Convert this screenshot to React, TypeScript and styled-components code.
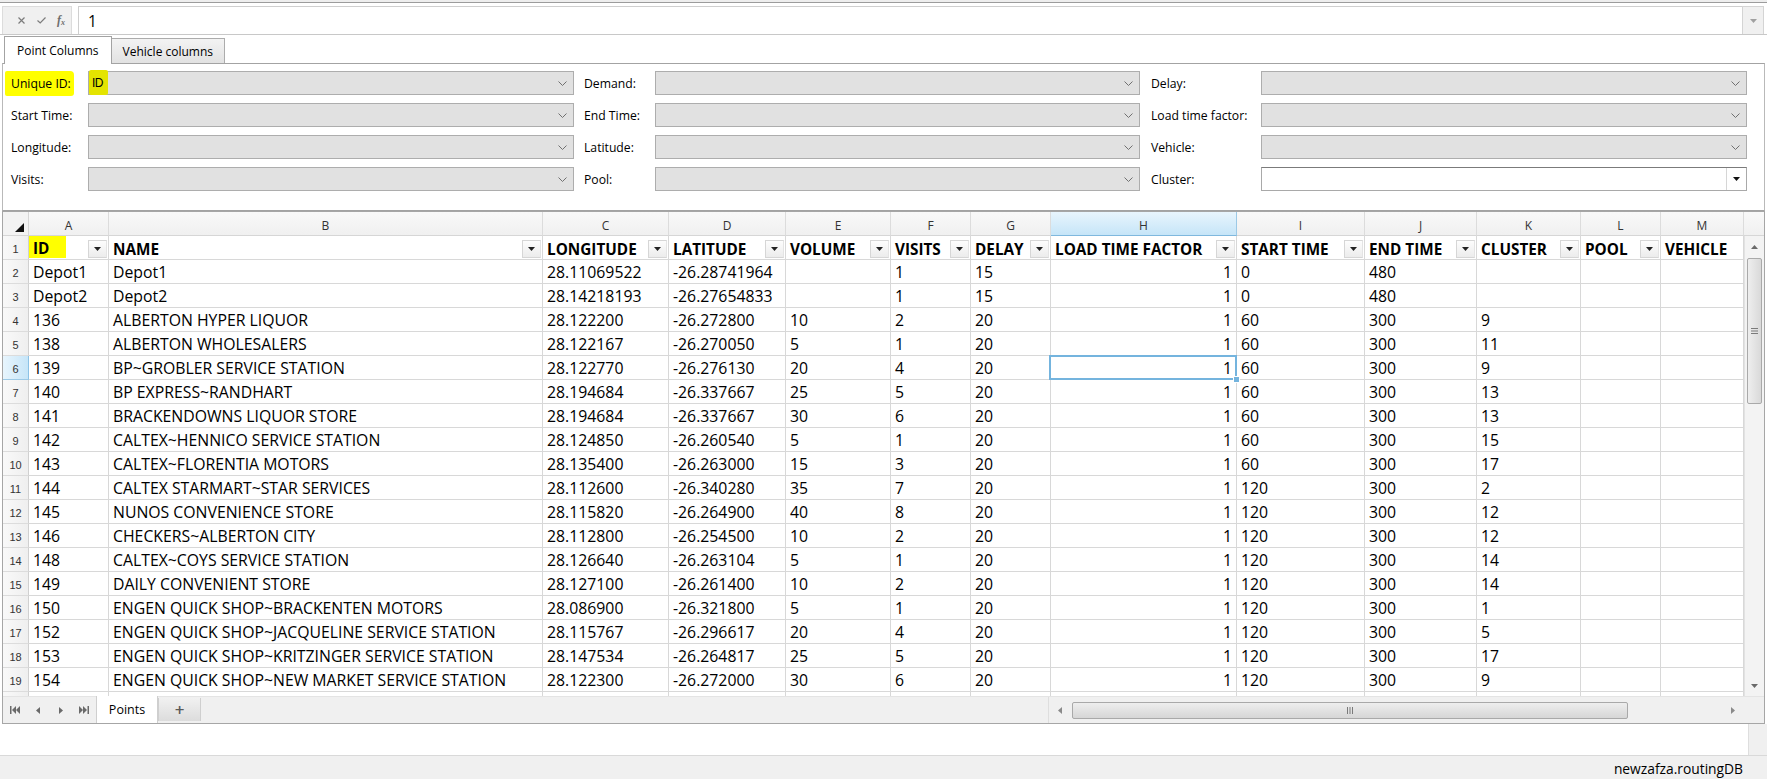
import React from "react";
import styled, { createGlobalStyle } from "styled-components";

const GlobalStyle = createGlobalStyle`
  html, body { margin: 0; padding: 0; background: #ffffff; }
  body { font-family: "Open Sans", "Noto Sans", sans-serif; color: #000; }
  *, *::before, *::after { box-sizing: border-box; }
`;

const Window = styled.div`
  width: 1767px;
  height: 779px;
  display: flex;
  flex-direction: column;
  background: #ffffff;
  overflow: hidden;
`;

const TopEdge = styled.div`
  flex: 0 0 3px;
  background: #eeeeee;
  border-bottom: 1px solid #9c9c9c;
`;

/* ---------- Formula bar ---------- */
const FormulaBar = styled.div`
  flex: 0 0 29px;
  margin-top: 3px;
  display: flex;
  padding: 0 3px 0 2px;
  border-bottom: 1px solid #c8c8c8;
`;

const FxButtons = styled.div`
  width: 70px;
  background: #f0f0f0;
  border: 1px solid #dcdcdc;
  border-bottom: none;
  display: flex;
  align-items: center;
  padding-left: 8px;
`;

const FxBtn = styled.span`
  width: 23px;
  display: flex;
  align-items: center;
  justify-content: center;
  color: #7c7c7c;
`;

const FxText = styled.span`
  font-family: "Liberation Serif", serif;
  font-style: italic;
  font-weight: 700;
  font-size: 12px;
  color: #6e6e6e;
  & sub { font-size: 8px; vertical-align: -1px; }
`;

const FormulaInput = styled.div`
  flex: 1;
  margin-left: 6px;
  border: 1px solid #cfcfcf;
  border-bottom: none;
  border-right: none;
  background: #fff;
  display: flex;
  align-items: center;
  padding: 1px 0 0 9px;
  font-size: 15.5px;
`;

const FormulaDrop = styled.div`
  width: 22px;
  background: #f0f0f0;
  border: 1px solid #d4d4d4;
  border-bottom: none;
  display: flex;
  align-items: center;
  justify-content: center;
`;

/* ---------- Tabs ---------- */
const TabStrip = styled.div`
  flex: 0 0 28px;
  display: flex;
  align-items: flex-end;
  padding-left: 4px;
`;

const Tab = styled.div<{ $active?: boolean }>`
  position: relative;
  z-index: ${(p) => (p.$active ? 2 : 1)};
  height: ${(p) => (p.$active ? 28 : 25)}px;
  margin-bottom: ${(p) => (p.$active ? -1 : 0)}px;
  margin-left: ${(p) => (p.$active ? 0 : -1)}px;
  padding: 0 ${(p) => (p.$active ? 12 : 11)}px;
  display: flex;
  align-items: center;
  font-size: 12px;
  border: 1px solid ${(p) => (p.$active ? "#a3a3a3" : "#acacac")};
  border-bottom: none;
  background: ${(p) =>
    p.$active ? "#ffffff" : "linear-gradient(#f3f3f3, #e2e2e2)"};
`;

/* ---------- Mapping panel ---------- */
const Panel = styled.div`
  flex: 0 0 148px;
  margin: 0 2px;
  border: 1px solid #a3a3a3;
  border-left-color: #b9b9b9;
  border-right-color: #b9b9b9;
  padding: 7px 0 0 8px;
`;

const FieldGrid = styled.div`
  display: grid;
  grid-template-columns: 77px 486px 81px 485px 121px 486px;
  grid-auto-rows: 24px;
  row-gap: 8px;
  align-items: center;
`;

const FieldLabel = styled.div<{ $indent: number }>`
  padding-left: ${(p) => p.$indent}px;
  font-size: 12.2px;
  white-space: nowrap;
  display: flex;
  align-items: center;
  height: 24px;
`;

const Marker = styled.span`
  display: inline-flex;
  align-items: center;
  height: 25px;
  margin-left: -6px;
  padding: 0 3px 0 6px;
  background: #ffff00;
  border-radius: 2px 4px 3px 2px;
`;

const Combo = styled.div<{ $edit?: boolean }>`
  height: 24px;
  display: flex;
  align-items: stretch;
  justify-content: space-between;
  border: 1px solid ${(p) => (p.$edit ? "#a9a9a9" : "#adadad")};
  border-top-color: ${(p) => (p.$edit ? "#7b7b7b" : "#adadad")};
  background: ${(p) => (p.$edit ? "#ffffff" : "#e1e1e1")};
  font-size: 12px;
`;

const ComboValue = styled.span<{ $marked?: boolean }>`
  display: flex;
  align-items: center;
  padding: 0 5px 0 3px;
  margin-top: -2px;
  margin-bottom: -1px;
  background: ${(p) => (p.$marked ? "#e4e400" : "transparent")};
  font-family: "Liberation Sans Narrow", "Liberation Sans", sans-serif;
  font-size: 12px;
  letter-spacing: -0.5px;
  border-radius: 2px;
`;

const ComboArrow = styled.span<{ $edit?: boolean }>`
  width: ${(p) => (p.$edit ? 20 : 22)}px;
  display: flex;
  align-items: center;
  justify-content: center;
  border-left: ${(p) => (p.$edit ? "1px solid #d6d6d6" : "none")};
`;

/* ---------- Spreadsheet ---------- */
const GridFrame = styled.div`
  flex: 0 0 508px;
  margin: 0 2px;
  border: 1px solid #a6a6a6;
  display: flex;
  flex-direction: column;
  background: #fff;
`;

const ColHeaderRow = styled.div`
  flex: 0 0 24px;
  display: flex;
  background: #f3f3f3;
`;

const Corner = styled.div`
  flex: 0 0 26px;
  border-right: 1px solid #d6d6d6;
  border-bottom: 1px solid #d6d6d6;
  display: flex;
  align-items: flex-end;
  justify-content: flex-end;
  padding: 0 4px 3px 0;
`;

const ColHead = styled.div<{ $w: number; $selected?: boolean }>`
  flex: 0 0 ${(p) => p.$w}px;
  border-right: 1px solid ${(p) => (p.$selected ? "#9cc9e6" : "#dcdcdc")};
  border-bottom: 1px solid ${(p) => (p.$selected ? "#7fb8de" : "#d6d6d6")};
  background: ${(p) =>
    p.$selected ? "linear-gradient(#e8f5fd, #c6e5f8)" : "linear-gradient(#f9f9f9, #f0f0f0)"};
  display: flex;
  align-items: center;
  justify-content: center;
  padding-top: 3px;
  font-size: 12px;
  color: #333;
`;

const ScrollHeadGap = styled.div`
  flex: 1;
  border-bottom: 1px solid #d6d6d6;
  background: linear-gradient(#f9f9f9, #f0f0f0);
`;

const Body = styled.div`
  flex: 0 0 460px;
  display: flex;
  min-height: 0;
`;

const RowsArea = styled.div`
  flex: 0 0 1741px;
  overflow: hidden;
`;

const Row = styled.div`
  display: flex;
  height: 24px;
`;

const RowHead = styled.div<{ $selected?: boolean }>`
  flex: 0 0 26px;
  height: 24px;
  border-right: 1px solid ${(p) => (p.$selected ? "#8cc2e6" : "#d0d0d0")};
  border-bottom: 1px solid ${(p) => (p.$selected ? "#9cc9e6" : "#dcdcdc")};
  background: ${(p) =>
    p.$selected ? "linear-gradient(90deg, #e8f5fd, #c6e5f8)" : "linear-gradient(90deg, #f9f9f9, #efefef)"};
  display: flex;
  align-items: center;
  justify-content: center;
  padding-top: 2px;
  font-family: "Liberation Sans", sans-serif;
  font-size: 11px;
  color: #333;
`;

const Cell = styled.div<{ $w: number; $right?: boolean; $selected?: boolean }>`
  flex: 0 0 ${(p) => p.$w}px;
  height: 24px;
  border-right: 1px solid #d8d8d8;
  border-bottom: 1px solid #d8d8d8;
  padding: 2px 4px 0 4px;
  font-size: 15.8px;
  line-height: 21px;
  text-align: ${(p) => (p.$right ? "right" : "left")};
  white-space: nowrap;
  overflow: ${(p) => (p.$selected ? "visible" : "hidden")};
  position: ${(p) => (p.$selected ? "relative" : "static")};
`;

const SelectionBox = styled.div`
  position: absolute;
  left: -2px;
  top: -1px;
  right: -1px;
  bottom: -1px;
  border: 2px solid #74b4de;
  z-index: 3;
  pointer-events: none;
`;

const FillHandle = styled.div`
  position: absolute;
  right: -5px;
  bottom: -5px;
  width: 7px;
  height: 7px;
  background: #74b4de;
  border: 1px solid #ffffff;
`;

const HeaderCell = styled.div<{ $w: number }>`
  flex: 0 0 ${(p) => p.$w}px;
  height: 24px;
  border-right: 1px solid #d8d8d8;
  border-bottom: 1px solid #d8d8d8;
  padding: 0 1px 0 4px;
  display: flex;
  align-items: center;
  justify-content: space-between;
  font-size: 15.3px;
  font-weight: 700;
  white-space: nowrap;
  overflow: hidden;
`;

const HeaderText = styled.span`
  padding-top: 2px;
`;

const HeaderMark = styled.span`
  display: flex;
  align-items: center;
  align-self: stretch;
  margin: 0 0 1px -4px;
  padding: 2px 17px 0 4px;
  background: #ffff00;
`;

const FilterBtn = styled.span`
  flex: 0 0 19px;
  height: 18px;
  align-self: flex-end;
  margin-bottom: 1px;
  border: 1px solid #d6d6d6;
  border-right-color: #e4e4e4;
  background: linear-gradient(#fdfdfd, #ececec);
  display: flex;
  align-items: center;
  justify-content: center;
`;

/* scrollbars */
const VScroll = styled.div`
  flex: 1;
  display: flex;
  flex-direction: column;
  background: #f3f3f3;
  border-left: 1px solid #e2e2e2;
`;

const ScrollArrow = styled.div<{ $size: number }>`
  flex: 0 0 ${(p) => p.$size}px;
  display: flex;
  align-items: center;
  justify-content: center;
`;

const VTrack = styled.div`
  flex: 1;
  padding: 1px 2px 0 2px;
`;

const VThumb = styled.div`
  height: 146px;
  border: 1px solid #a9a9a9;
  border-radius: 2px;
  background: linear-gradient(90deg, #eeeeee, #d9d9d9);
  display: flex;
  align-items: center;
  justify-content: center;
`;

const BottomBar = styled.div`
  flex: 0 0 22px;
  display: flex;
  background: #f0f0f0;
  border-top: 1px solid #e4e4e4;
`;

const SheetNav = styled.div`
  flex: 0 0 93px;
  display: flex;
  align-items: center;
`;

const NavBtn = styled.span`
  flex: 0 0 23px;
  display: flex;
  align-items: center;
  justify-content: center;
`;

const SheetTab = styled.div<{ $active?: boolean }>`
  flex: 0 0 ${(p) => (p.$active ? 62 : 43)}px;
  margin: ${(p) => (p.$active ? "-1px 0 0 0" : "1px 0 2px 0")};
  display: flex;
  align-items: center;
  justify-content: center;
  font-size: ${(p) => (p.$active ? 12.5 : 17)}px;
  font-weight: ${(p) => (p.$active ? 400 : 600)};
  color: ${(p) => (p.$active ? "#000" : "#5a5a5a")};
  background: ${(p) => (p.$active ? "#ffffff" : "linear-gradient(#f1f1f1, #dcdcdc)")};
  border-left: 1px solid #cfcfcf;
  border-right: 1px solid #cfcfcf;
`;

const TabSpace = styled.div`
  flex: 0 0 848px;
  border-right: 1px solid #dedede;
`;

const HScroll = styled.div`
  flex: 0 0 694px;
  display: flex;
  align-items: center;
`;

const HThumb = styled.div`
  flex: 0 0 556px;
  height: 17px;
  margin-left: 1px;
  border: 1px solid #a9a9a9;
  border-radius: 2px;
  background: linear-gradient(#eeeeee, #d6d6d6);
  display: flex;
  align-items: center;
  justify-content: center;
`;

const HTrack = styled.div`
  flex: 1;
`;

/* ---------- Bottom ---------- */
const BlankArea = styled.div`
  flex: 0 0 31px;
  display: flex;
`;

const BlankFill = styled.div`
  flex: 1;
`;

const BlankStub = styled.div`
  flex: 0 0 19px;
  background: #f0f0f0;
  border-left: 1px solid #dedede;
`;

const StatusBar = styled.div`
  flex: 0 0 26px;
  background: #f0f0f0;
  border-top: 1px solid #d9d9d9;
  display: flex;
  align-items: center;
  justify-content: flex-end;
  padding-right: 24px;
  font-size: 13.8px;
`;

const Taskbar = styled.div`
  flex: 0 0 3px;
  background: #1d2a2f;
`;

/* ---------- icons ---------- */
const Chevron = () => (
  <svg width="9" height="5" viewBox="0 0 9 5">
    <polyline points="0.5,0.5 4.5,4.5 8.5,0.5" fill="none" stroke="#707070" strokeWidth="1" />
  </svg>
);

const Tri = ({ dir = "down", color = "#000", w = 7, h = 4 }: { dir?: string; color?: string; w?: number; h?: number }) => {
  let pts = `0,0 ${w},0 ${w / 2},${h}`;
  if (dir === "up") pts = `0,${h} ${w},${h} ${w / 2},0`;
  if (dir === "left") pts = `${w},0 ${w},${h} 0,${h / 2}`;
  if (dir === "right") pts = `0,0 0,${h} ${w},${h / 2}`;
  return (
    <svg width={w} height={h} viewBox={`0 0 ${w} ${h}`}>
      <polygon points={pts} fill={color} />
    </svg>
  );
};

const NavFirst = () => (
  <svg width="10" height="8" viewBox="0 0 10 8">
    <rect x="0" y="0" width="1.5" height="8" fill="#6a6a6a" />
    <polygon points="6,0 6,8 2,4" fill="#6a6a6a" />
    <polygon points="10,0 10,8 6,4" fill="#6a6a6a" />
  </svg>
);
const NavLast = () => (
  <svg width="10" height="8" viewBox="0 0 10 8">
    <polygon points="0,0 0,8 4,4" fill="#6a6a6a" />
    <polygon points="4,0 4,8 8,4" fill="#6a6a6a" />
    <rect x="8.5" y="0" width="1.5" height="8" fill="#6a6a6a" />
  </svg>
);

const CornerTri = () => (
  <svg width="9" height="9" viewBox="0 0 9 9">
    <polygon points="9,0 9,9 0,9" fill="#111" />
  </svg>
);

const Grip = ({ vertical }: { vertical?: boolean }) =>
  vertical ? (
    <svg width="7" height="6" viewBox="0 0 7 6">
      <rect x="0" y="0" width="7" height="1" fill="#7a7a7a" />
      <rect x="0" y="2.5" width="7" height="1" fill="#7a7a7a" />
      <rect x="0" y="5" width="7" height="1" fill="#7a7a7a" />
    </svg>
  ) : (
    <svg width="6" height="7" viewBox="0 0 6 7">
      <rect x="0" y="0" width="1" height="7" fill="#7a7a7a" />
      <rect x="2.5" y="0" width="1" height="7" fill="#7a7a7a" />
      <rect x="5" y="0" width="1" height="7" fill="#7a7a7a" />
    </svg>
  );

/* ---------- data ---------- */
type Field = { label: string; marked?: boolean; value?: string; edit?: boolean };
const FIELD_ROWS: Field[][] = [
  [{ label: "Unique ID:", marked: true, value: "ID" }, { label: "Demand:" }, { label: "Delay:" }],
  [{ label: "Start Time:" }, { label: "End Time:" }, { label: "Load time factor:" }],
  [{ label: "Longitude:" }, { label: "Latitude:" }, { label: "Vehicle:" }],
  [{ label: "Visits:" }, { label: "Pool:" }, { label: "Cluster:", edit: true }],
];
const INDENTS = [0, 10, 11];

type Col = { w: number; title: string; letter: string; right?: boolean; noFilter?: boolean };
const COLS: Col[] = [
  { w: 80, title: "ID", letter: "A" },
  { w: 434, title: "NAME", letter: "B" },
  { w: 126, title: "LONGITUDE", letter: "C" },
  { w: 117, title: "LATITUDE", letter: "D" },
  { w: 105, title: "VOLUME", letter: "E" },
  { w: 80, title: "VISITS", letter: "F" },
  { w: 80, title: "DELAY", letter: "G" },
  { w: 186, title: "LOAD TIME FACTOR", letter: "H", right: true },
  { w: 128, title: "START TIME", letter: "I" },
  { w: 112, title: "END TIME", letter: "J" },
  { w: 104, title: "CLUSTER", letter: "K" },
  { w: 80, title: "POOL", letter: "L" },
  { w: 83, title: "VEHICLE", letter: "M", noFilter: true },
];

const ROWS: string[][] = [
  ["Depot1", "Depot1", "28.11069522", "-26.28741964", "", "1", "15", "1", "0", "480", "", "", ""],
  ["Depot2", "Depot2", "28.14218193", "-26.27654833", "", "1", "15", "1", "0", "480", "", "", ""],
  ["136", "ALBERTON HYPER LIQUOR", "28.122200", "-26.272800", "10", "2", "20", "1", "60", "300", "9", "", ""],
  ["138", "ALBERTON WHOLESALERS", "28.122167", "-26.270050", "5", "1", "20", "1", "60", "300", "11", "", ""],
  ["139", "BP~GROBLER SERVICE STATION", "28.122770", "-26.276130", "20", "4", "20", "1", "60", "300", "9", "", ""],
  ["140", "BP EXPRESS~RANDHART", "28.194684", "-26.337667", "25", "5", "20", "1", "60", "300", "13", "", ""],
  ["141", "BRACKENDOWNS LIQUOR STORE", "28.194684", "-26.337667", "30", "6", "20", "1", "60", "300", "13", "", ""],
  ["142", "CALTEX~HENNICO SERVICE STATION", "28.124850", "-26.260540", "5", "1", "20", "1", "60", "300", "15", "", ""],
  ["143", "CALTEX~FLORENTIA MOTORS", "28.135400", "-26.263000", "15", "3", "20", "1", "60", "300", "17", "", ""],
  ["144", "CALTEX STARMART~STAR SERVICES", "28.112600", "-26.340280", "35", "7", "20", "1", "120", "300", "2", "", ""],
  ["145", "NUNOS CONVENIENCE STORE", "28.115820", "-26.264900", "40", "8", "20", "1", "120", "300", "12", "", ""],
  ["146", "CHECKERS~ALBERTON CITY", "28.112800", "-26.254500", "10", "2", "20", "1", "120", "300", "12", "", ""],
  ["148", "CALTEX~COYS SERVICE STATION", "28.126640", "-26.263104", "5", "1", "20", "1", "120", "300", "14", "", ""],
  ["149", "DAILY CONVENIENT STORE", "28.127100", "-26.261400", "10", "2", "20", "1", "120", "300", "14", "", ""],
  ["150", "ENGEN QUICK SHOP~BRACKENTEN MOTORS", "28.086900", "-26.321800", "5", "1", "20", "1", "120", "300", "1", "", ""],
  ["152", "ENGEN QUICK SHOP~JACQUELINE SERVICE STATION", "28.115767", "-26.296617", "20", "4", "20", "1", "120", "300", "5", "", ""],
  ["153", "ENGEN QUICK SHOP~KRITZINGER SERVICE STATION", "28.147534", "-26.264817", "25", "5", "20", "1", "120", "300", "17", "", ""],
  ["154", "ENGEN QUICK SHOP~NEW MARKET SERVICE STATION", "28.122300", "-26.272000", "30", "6", "20", "1", "120", "300", "9", "", ""],
];
const EMPTY_ROW: string[] = COLS.map(() => "");

const SEL_ROW = 6;
const SEL_COL = 7;

export default function App() {
  return (
    <Window>
      <GlobalStyle />
      <TopEdge />
      <FormulaBar>
        <FxButtons>
          <FxBtn>
            <svg width="7" height="7" viewBox="0 0 7 7">
              <path d="M0.5 0.5 L6.5 6.5 M6.5 0.5 L0.5 6.5" stroke="#7c7c7c" strokeWidth="1.2" />
            </svg>
          </FxBtn>
          <FxBtn>
            <svg width="9" height="7" viewBox="0 0 9 7">
              <path d="M0.5 3.5 L3.2 6 L8.5 0.5" fill="none" stroke="#7c7c7c" strokeWidth="1.2" />
            </svg>
          </FxBtn>
          <FxBtn>
            <FxText>
              f<sub>x</sub>
            </FxText>
          </FxBtn>
        </FxButtons>
        <FormulaInput>1</FormulaInput>
        <FormulaDrop>
          <Tri color="#a0a0a0" w={7} h={4} />
        </FormulaDrop>
      </FormulaBar>

      <TabStrip>
        <Tab $active>Point Columns</Tab>
        <Tab>Vehicle columns</Tab>
      </TabStrip>

      <Panel>
        <FieldGrid>
          {FIELD_ROWS.map((row, ri) =>
            row.map((f, ci) => (
              <React.Fragment key={`${ri}-${ci}`}>
                <FieldLabel $indent={INDENTS[ci]}>
                  {f.marked ? <Marker>{f.label}</Marker> : f.label}
                </FieldLabel>
                <Combo $edit={f.edit}>
                  <ComboValue $marked={f.marked}>{f.value ?? ""}</ComboValue>
                  <ComboArrow $edit={f.edit}>
                    {f.edit ? <Tri w={7} h={4} color="#111" /> : <Chevron />}
                  </ComboArrow>
                </Combo>
              </React.Fragment>
            ))
          )}
        </FieldGrid>
      </Panel>

      <GridFrame>
        <ColHeaderRow>
          <Corner>
            <CornerTri />
          </Corner>
          {COLS.map((c, i) => (
            <ColHead key={c.letter} $w={c.w} $selected={i === SEL_COL}>
              {c.letter}
            </ColHead>
          ))}
          <ScrollHeadGap />
        </ColHeaderRow>
        <Body>
          <RowsArea>
            <Row>
              <RowHead>1</RowHead>
              {COLS.map((c, i) => (
                <HeaderCell key={c.title} $w={c.w}>
                  {i === 0 ? <HeaderMark>{c.title}</HeaderMark> : <HeaderText>{c.title}</HeaderText>}
                  {!c.noFilter && (
                    <FilterBtn>
                      <Tri w={7} h={4} color="#222" />
                    </FilterBtn>
                  )}
                </HeaderCell>
              ))}
            </Row>
            {ROWS.map((r, ri) => {
              const rowNo = ri + 2;
              return (
                <Row key={rowNo}>
                  <RowHead $selected={rowNo === SEL_ROW}>{rowNo}</RowHead>
                  {COLS.map((c, ci) => {
                    const sel = rowNo === SEL_ROW && ci === SEL_COL;
                    return (
                      <Cell key={ci} $w={c.w} $right={c.right} $selected={sel}>
                        {r[ci]}
                        {sel && (
                          <SelectionBox>
                            <FillHandle />
                          </SelectionBox>
                        )}
                      </Cell>
                    );
                  })}
                </Row>
              );
            })}
            <Row>
              <RowHead />
              {COLS.map((c, ci) => (
                <Cell key={ci} $w={c.w}>
                  {EMPTY_ROW[ci]}
                </Cell>
              ))}
            </Row>
          </RowsArea>
          <VScroll>
            <ScrollArrow $size={21}>
              <Tri dir="up" w={7} h={4} color="#6a6a6a" />
            </ScrollArrow>
            <VTrack>
              <VThumb>
                <Grip vertical />
              </VThumb>
            </VTrack>
            <ScrollArrow $size={21}>
              <Tri dir="down" w={7} h={4} color="#6a6a6a" />
            </ScrollArrow>
          </VScroll>
        </Body>
        <BottomBar>
          <SheetNav>
            <NavBtn>
              <NavFirst />
            </NavBtn>
            <NavBtn>
              <Tri dir="left" w={4} h={7} color="#6a6a6a" />
            </NavBtn>
            <NavBtn>
              <Tri dir="right" w={4} h={7} color="#6a6a6a" />
            </NavBtn>
            <NavBtn>
              <NavLast />
            </NavBtn>
          </SheetNav>
          <SheetTab $active>Points</SheetTab>
          <SheetTab>+</SheetTab>
          <TabSpace />
          <HScroll>
            <ScrollArrow $size={22}>
              <Tri dir="left" w={4} h={7} color="#8a8a8a" />
            </ScrollArrow>
            <HThumb>
              <Grip />
            </HThumb>
            <HTrack />
            <ScrollArrow $size={20}>
              <Tri dir="right" w={4} h={7} color="#8a8a8a" />
            </ScrollArrow>
          </HScroll>
        </BottomBar>
      </GridFrame>

      <BlankArea>
        <BlankFill />
        <BlankStub />
      </BlankArea>
      <StatusBar>newzafza.routingDB</StatusBar>
      <Taskbar />
    </Window>
  );
}
